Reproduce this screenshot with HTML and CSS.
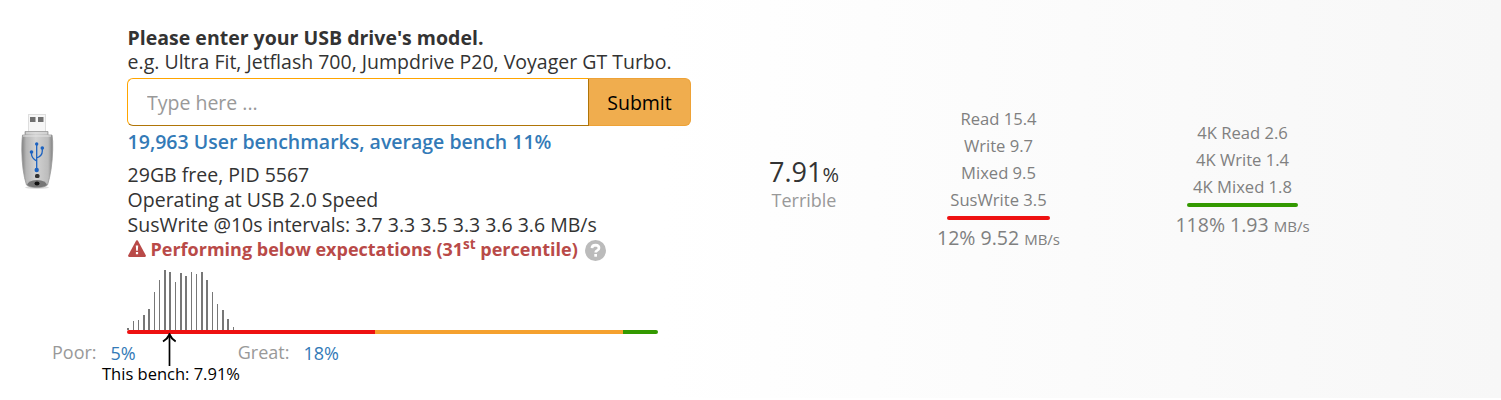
FILE: index.html
```html
<!DOCTYPE html>
<html lang="en">
<head>
  <meta charset="UTF-8">
  <meta name="viewport" content="width=device-width, initial-scale=1.0">
  <title>USB benchmark</title>
  <link rel="stylesheet" href="styles.css">
</head>
<body>
  <div class="bench-row">
    <div class="thumb">
      <svg width="38" height="78" viewBox="0 0 38 78">
        <defs>
          <linearGradient id="shell" x1="0" x2="1" y1="0" y2="0">
            <stop offset="0" stop-color="#808080"/>
            <stop offset=".14" stop-color="#b5b5b5"/>
            <stop offset=".45" stop-color="#d2d2d2"/>
            <stop offset=".85" stop-color="#bcbcbc"/>
            <stop offset="1" stop-color="#808080"/>
          </linearGradient>
        </defs>
        <ellipse cx="18" cy="74.500" rx="12" ry="1.500" fill="#ddd"/>
        <rect x="9.500" y="1.500" width="17" height="18" fill="#f6f6f6" stroke="#dedede"/>
        <rect x="11" y="4" width="5.500" height="5" fill="#707070"/>
        <rect x="19" y="4" width="5.500" height="5" fill="#707070"/>
        <path d="M6 18.500h23v3.500h4q1 5 .700 15Q33 58 28.500 72q-3 2.500-10.500 2.500T7.500 72Q3 58 2.800 37q0-10 .700-15H6z" fill="url(#shell)" stroke="#999" stroke-width=".8"/>
        <path d="M7 20h21M4 23h28" stroke="#e4e4e4"/>
        <path d="M17.700 56V30M12.500 38v3q0 4 5.200 7M23.300 35v3q0 5-5.600 7" fill="none" stroke="#1c62c0" stroke-width="1.300"/>
        <circle cx="17.700" cy="57" r="2.200" fill="#1c62c0"/>
        <circle cx="12.500" cy="39" r="1.800" fill="#1c62c0"/>
        <circle cx="23.300" cy="35" r="1.800" fill="#1c62c0"/>
        <circle cx="17.700" cy="31" r="1.700" fill="#1c62c0"/>
        <rect x="16" y="61" width="4.500" height="4" rx="1.500" fill="#333"/>
        <path d="M8 72q1-4.500 10-5q9 .500 10 5q-3 2.300-10 2.300T8 72z" fill="#777"/>
        <ellipse cx="18" cy="70.500" rx="2.500" ry="2" fill="#111"/>
      </svg>
    </div>

    <div class="details">
      <div class="prompt"><b>Please enter your USB drive's model.</b></div>
      <div class="prompt">e.g. Ultra Fit, Jetflash 700, Jumpdrive P20, Voyager GT Turbo.</div>
      <div class="input-group">
        <input class="model-input" type="text" placeholder="Type here ...">
        <button class="submit-btn">Submit</button>
      </div>
      <a class="bench-link">19,963 User benchmarks, average bench 11%</a>
      <div class="info">29GB free, PID 5567</div>
      <div class="info">Operating at USB 2.0 Speed</div>
      <div class="info">SusWrite @10s intervals: 3.7 3.3 3.5 3.3 3.6 3.6 MB/s</div>
      <div class="warning">
        <svg class="warn-icon" width="18" height="17" viewBox="0 0 18 17">
          <path d="M8.200.6Q9 0 9.800.6L17.900 15.500Q18 16.700 17 17H1Q0 16.700.1 15.500z" fill="#b94a48"/>
          <path d="M7.800 5.500h2.400l-.4 5.300H8.200zM7.900 12h2.200v2.200H7.900z" fill="#fff"/>
        </svg>
        <span>Performing below expectations (31<sup>st</sup> percentile)</span>
        <svg class="help-icon" width="21" height="21" viewBox="0 0 21 21">
          <circle cx="10.500" cy="10.500" r="10.500" fill="#bbb"/>
          <path d="M6.900 8.200Q7.100 5.100 10.600 5.100Q14 5.200 14 8Q14 9.600 12 10.600Q10.700 11.300 10.700 12.600" fill="none" stroke="#fff" stroke-width="2.700"/>
          <rect x="9.300" y="14" width="2.700" height="2.700" fill="#fff"/>
        </svg>
      </div>

      <div class="chart">
        <svg class="bars" width="108" height="60" fill="#777" shape-rendering="crispEdges">
          <rect x="0" y="58" width="2" height="2"/>
          <rect x="6" y="51" width="1" height="9"/>
          <rect x="11" y="50" width="1" height="10"/>
          <rect x="16" y="45" width="2" height="15"/>
          <rect x="21" y="39" width="2" height="21"/>
          <rect x="27" y="22" width="1" height="38"/>
          <rect x="32" y="10" width="1" height="50"/>
          <rect x="37" y="0" width="2" height="60"/>
          <rect x="42" y="2" width="2" height="58"/>
          <rect x="48" y="12" width="1" height="48"/>
          <rect x="53" y="3" width="2" height="57"/>
          <rect x="58" y="6" width="2" height="54"/>
          <rect x="64" y="2" width="1" height="58"/>
          <rect x="69" y="4" width="1" height="56"/>
          <rect x="74" y="2" width="2" height="58"/>
          <rect x="79" y="10" width="2" height="50"/>
          <rect x="85" y="22" width="1" height="38"/>
          <rect x="90" y="34" width="1" height="26"/>
          <rect x="95" y="40" width="2" height="20"/>
          <rect x="100" y="49" width="2" height="11"/>
          <rect x="106" y="57" width="1" height="3"/>
        </svg>
        <div class="scale">
          <span class="poor"></span>
          <span class="average"></span>
          <span class="great"></span>
        </div>
        <div class="marker">
          <svg width="14" height="34" viewBox="0 0 14 34" fill="none" stroke="#000">
            <path d="M7.500 1v32" stroke-width="1.700"/>
            <path d="M1 8.500Q5.500 6 7.500 1.500Q9.500 6 13.700 8.500" stroke-width="2"/>
          </svg>
          <div>This bench: 7.91%</div>
        </div>
      </div>
      <div class="legend">
        <span>Poor:</span><a>5%</a>
        <span class="legend-great">Great:</span><a>18%</a>
      </div>
    </div>

    <div class="stat score">
      <div class="score-value">7.91<small>%</small></div>
      <div class="score-label">Terrible</div>
    </div>

    <div class="stat sequential">
      <div>Read 15.4</div>
      <div>Write 9.7</div>
      <div>Mixed 9.5</div>
      <div>SusWrite 3.5</div>
      <div class="line red"></div>
      <div class="total">12% 9.52 <small>MB/s</small></div>
    </div>

    <div class="stat random">
      <div>4K Read 2.6</div>
      <div>4K Write 1.4</div>
      <div>4K Mixed 1.8</div>
      <div class="line green"></div>
      <div class="total">118% 1.93 <small>MB/s</small></div>
    </div>
  </div>
</body>
</html>
```

FILE: styles.css
```css
* {
  box-sizing: border-box;
}
body {
  margin: 0;
  background: #fff;
  color: #333;
  font-family: 'Open Sans', sans-serif;
  font-size: 19.5px;
}
a {
  color: #337ab7;
}
.bench-row {
  display: grid;
  grid-template-columns: 127px 577px 200px 189px 299px;
  height: 398px;
  background: linear-gradient(to right, #fff 44%, #f7f7f7);
}
.thumb {
  padding: 113px 0 0 19px;
}
.details {
  padding-top: 26px;
  white-space: nowrap;
}
.prompt {
  height: 24px;
  padding-left: 0.6px;
  line-height: 24px;
}
.input-group {
  display: flex;
  width: 564px;
  height: 48px;
  margin-top: 4px;
}
.model-input {
  width: 462px;
  padding: 0 19px;
  border: 1px solid;
  border-color: #ffa500 #b07508 #b07508 #ffa500;
  border-radius: 6px 0 0 6px;
  background: #fff;
  font: inherit;
}
.model-input::placeholder {
  color: #999;
}
.submit-btn {
  flex: 1;
  padding: 0;
  border: 1px solid #eea236;
  border-left: 0;
  border-radius: 0 6px 6px 0;
  background: #f0ad4e;
  color: #000;
  font: inherit;
}
.bench-link {
  display: block;
  height: 36px;
  padding-left: 0.6px;
  line-height: 32px;
  font-weight: 600;
}
.info {
  height: 25px;
  padding-left: 0.6px;
  line-height: 25px;
}
.warning {
  display: flex;
  height: 25px;
  padding-left: 0.5px;
  line-height: 25px;
  color: #b94a48;
  font-size: 18px;
  font-weight: bold;
}
.warning sup {
  font-size: 75%;
  line-height: 0;
  position: relative;
  top: -0.5em;
  vertical-align: baseline;
}
.warn-icon {
  margin: 3px 5px 0 0;
}
.help-icon {
  margin: 3px 0 0 7px;
}
.chart {
  position: relative;
  width: 531px;
  padding-top: 8px;
}
.bars {
  display: block;
}
.scale {
  display: flex;
  height: 4px;
  border-radius: 2px;
  overflow: hidden;
}
.poor {
  width: 248px;
  background: #ee1111;
}
.average {
  width: 248px;
  background: #f5a12e;
}
.great {
  flex: 1;
  background: #339900;
}
/* sits over the scale at the score of this bench */
.marker {
  position: absolute;
  top: 71px;
  left: -26px;
  width: 140px;
  color: #000;
  font-size: 16.5px;
  line-height: 22px;
  text-align: center;
}
.marker svg {
  display: block;
  margin: 0 auto -4px 61px;
}
.legend {
  display: flex;
  margin: 6px 0 0 -75px;
  color: #999;
  font-size: 18px;
  line-height: 24px;
}
.legend a {
  margin-left: 14px;
  padding-top: 1px;
}
.legend-great {
  margin-left: 102px;
}
.stat {
  color: #808080;
  font-size: 16.6px;
  line-height: 27px;
  text-align: center;
}
.score {
  padding-top: 155px;
}
.score-value {
  color: #333;
  font-size: 27px;
  line-height: 34px;
}
.score-value small {
  font-size: 20px;
}
.score-label {
  margin-top: -4px;
  color: #999;
  font-size: 18px;
  line-height: 24px;
}
.sequential {
  padding-top: 105px;
}
.random {
  padding-top: 119px;
}
.line {
  height: 4px;
  margin: 3px auto 0;
  border-radius: 2px;
}
.red {
  width: 103px;
  background: #ee1111;
}
.green {
  width: 111px;
  background: #339900;
}
.total {
  margin-top: 4px;
  font-size: 19.5px;
}
.total small {
  font-size: 15px;
}
```
